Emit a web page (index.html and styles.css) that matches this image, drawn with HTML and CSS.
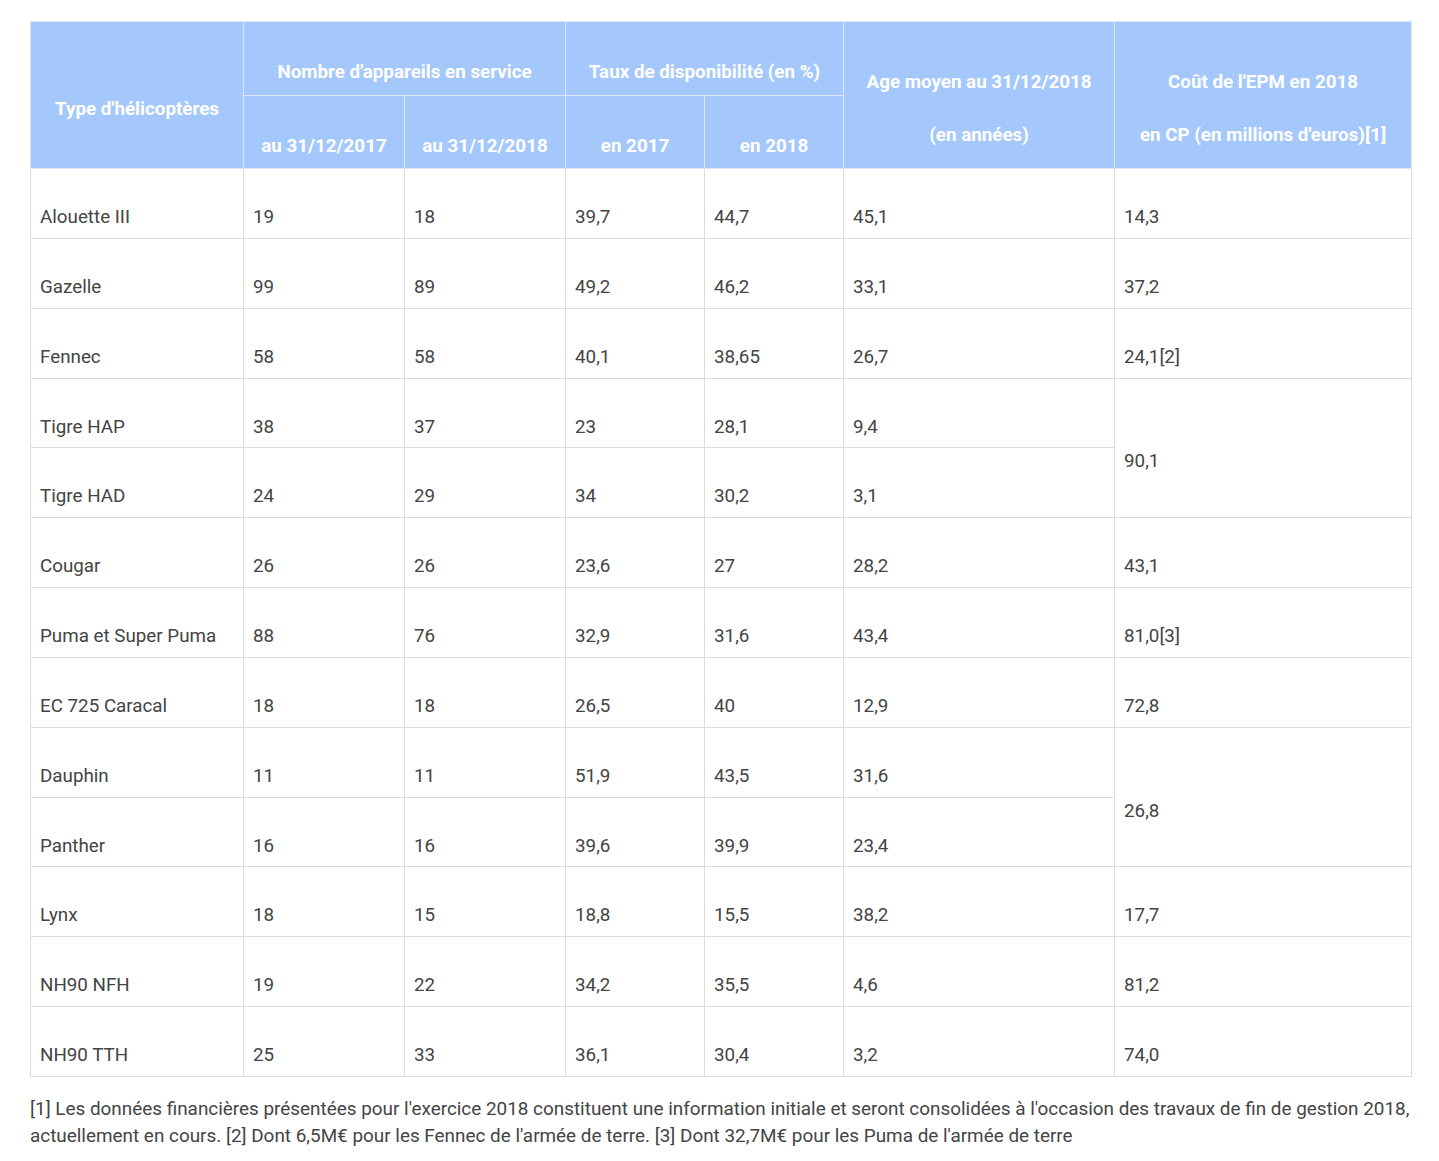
FILE: index.html
```html
<!DOCTYPE html>
<html lang="fr">
<head>
<meta charset="utf-8">
<title>Hélicoptères</title>
<link rel="stylesheet" href="styles.css">
</head>
<body>
<div class="page">
<table class="data">
<colgroup>
<col class="c1"><col class="c2"><col class="c3"><col class="c4"><col class="c5"><col class="c6"><col class="c7">
</colgroup>
<thead>
<tr>
<th rowspan="2">Type d'hélicoptères</th>
<th colspan="2">Nombre d'appareils en service</th>
<th colspan="2">Taux de disponibilité (en %)</th>
<th rowspan="2"><span class="ln">Age moyen au 31/12/2018</span><span class="ln ln2">(en années)</span></th>
<th rowspan="2"><span class="ln">Coût de l'EPM en 2018</span><span class="ln ln2">en CP (en millions d'euros)[1]</span></th>
</tr>
<tr class="sub">
<th>au 31/12/2017</th>
<th>au 31/12/2018</th>
<th>en 2017</th>
<th>en 2018</th>
</tr>
</thead>
<tbody>
<tr><td>Alouette III</td><td>19</td><td>18</td><td>39,7</td><td>44,7</td><td>45,1</td><td>14,3</td></tr>
<tr><td>Gazelle</td><td>99</td><td>89</td><td>49,2</td><td>46,2</td><td>33,1</td><td>37,2</td></tr>
<tr><td>Fennec</td><td>58</td><td>58</td><td>40,1</td><td>38,65</td><td>26,7</td><td>24,1[2]</td></tr>
<tr><td>Tigre HAP</td><td>38</td><td>37</td><td>23</td><td>28,1</td><td>9,4</td><td rowspan="2">90,1</td></tr>
<tr><td>Tigre HAD</td><td>24</td><td>29</td><td>34</td><td>30,2</td><td>3,1</td></tr>
<tr><td>Cougar</td><td>26</td><td>26</td><td>23,6</td><td>27</td><td>28,2</td><td>43,1</td></tr>
<tr><td>Puma et Super Puma</td><td>88</td><td>76</td><td>32,9</td><td>31,6</td><td>43,4</td><td>81,0[3]</td></tr>
<tr><td>EC 725 Caracal</td><td>18</td><td>18</td><td>26,5</td><td>40</td><td>12,9</td><td>72,8</td></tr>
<tr><td>Dauphin</td><td>11</td><td>11</td><td>51,9</td><td>43,5</td><td>31,6</td><td rowspan="2">26,8</td></tr>
<tr><td>Panther</td><td>16</td><td>16</td><td>39,6</td><td>39,9</td><td>23,4</td></tr>
<tr><td>Lynx</td><td>18</td><td>15</td><td>18,8</td><td>15,5</td><td>38,2</td><td>17,7</td></tr>
<tr><td>NH90 NFH</td><td>19</td><td>22</td><td>34,2</td><td>35,5</td><td>4,6</td><td>81,2</td></tr>
<tr><td>NH90 TTH</td><td>25</td><td>33</td><td>36,1</td><td>30,4</td><td>3,2</td><td>74,0</td></tr>
</tbody>
</table>
<p class="notes">[1] Les données financières présentées pour l'exercice 2018 constituent une information initiale et seront consolidées à l'occasion des travaux de fin de gestion 2018, actuellement en cours. [2] Dont 6,5M€ pour les Fennec de l'armée de terre. [3] Dont 32,7M€ pour les Puma de l'armée de terre</p>
</div>
</body>
</html>
```

FILE: styles.css
```css
html, body {
  margin: 0;
  padding: 0;
  background: #ffffff;
}

body {
  font-family: Roboto, "Liberation Sans", Arial, sans-serif;
  color: #444444;
  font-size: 18.8px;
}

.page {
  padding: 21px 28px 0 30px;
}

.data {
  width: 1381px;
  border-collapse: collapse;
  table-layout: fixed;
  font-size: 18.8px;
}

.c1 { width: 213px; }
.c2 { width: 161px; }
.c3 { width: 161px; }
.c4 { width: 139px; }
.c5 { width: 139px; }
.c6 { width: 271px; }
.c7 { width: 297px; }

.data th,
.data td {
  border: 1px solid #dddddd;
  line-height: 22px;
  vertical-align: middle;
}

.data th {
  background: #a4c8fb;
  color: #ffffff;
  font-weight: 700;
  text-align: center;
  padding: 39px 9px 12px;
  border-color: #dde6f2;
}

.data .sub th {
  padding-bottom: 11px;
}

.ln {
  display: block;
}

.ln2 {
  margin-top: 31px;
}

.data td {
  text-align: left;
  padding: 38px 9px 9px;
  line-height: 21.85px;
  color: #444444;
}

.notes {
  margin: 18px 0 0 0;
  line-height: 27px;
  color: #444444;
  font-size: 18.9px;
}
```
